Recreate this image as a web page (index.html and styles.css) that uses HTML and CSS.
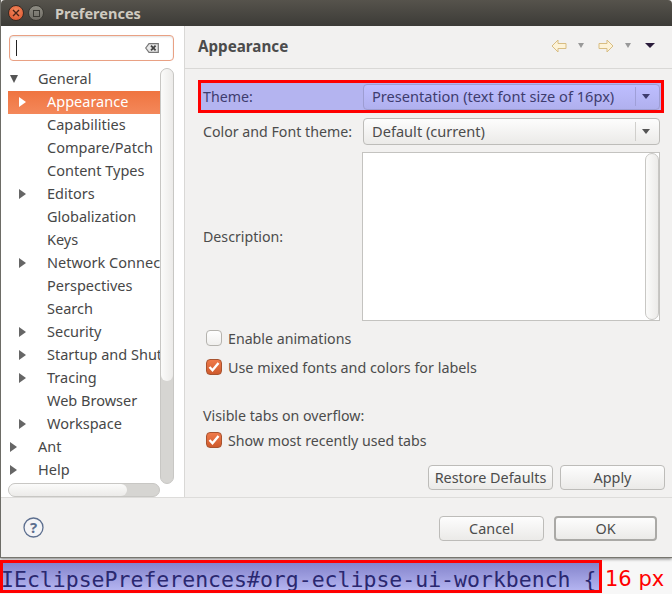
FILE: index.html
```html
<!DOCTYPE html>
<html lang="en">
<head>
    <meta charset="UTF-8">
    <title>Preferences</title>
    <link rel="stylesheet" href="styles.css">
</head>
<body>
    <div class="window">
        <header class="titlebar">
            <span class="win-btn close">
                <svg width="8" height="8" viewBox="0 0 8 8"><path d="M1 1l6 6M7 1l-6 6" stroke="#4a2418" stroke-width="1.4"/></svg>
            </span>
            <span class="win-btn max"><span class="max-box"></span></span>
            <span class="title">Preferences</span>
        </header>
        <div class="main">
            <aside class="sidebar">
                <div class="search">
                    <span class="caret"></span>
                    <svg class="clear" width="14" height="10" viewBox="0 0 14 10"><path d="M4 .7h9.3v8.6H4L.7 5z" fill="#e8e8e8" stroke="#777" stroke-width="1.2"/><path d="M6 2.6l4.6 4.8M10.6 2.6L6 7.4" stroke="#444" stroke-width="1.8"/></svg>
                </div>
                <div class="tree-wrap">
                    <div class="tree-col">
                        <ul class="tree">
                            <li class="lvl0"><i class="arrow open"></i>General</li>
                            <li class="lvl1 selected"><i class="arrow"></i>Appearance</li>
                            <li class="lvl1"><i></i>Capabilities</li>
                            <li class="lvl1"><i></i>Compare/Patch</li>
                            <li class="lvl1"><i></i>Content Types</li>
                            <li class="lvl1"><i class="arrow"></i>Editors</li>
                            <li class="lvl1"><i></i>Globalization</li>
                            <li class="lvl1"><i></i>Keys</li>
                            <li class="lvl1"><i class="arrow"></i>Network Connections</li>
                            <li class="lvl1"><i></i>Perspectives</li>
                            <li class="lvl1"><i></i>Search</li>
                            <li class="lvl1"><i class="arrow"></i>Security</li>
                            <li class="lvl1"><i class="arrow"></i>Startup and Shutdown</li>
                            <li class="lvl1"><i class="arrow"></i>Tracing</li>
                            <li class="lvl1"><i></i>Web Browser</li>
                            <li class="lvl1"><i class="arrow"></i>Workspace</li>
                            <li class="lvl0"><i class="arrow"></i>Ant</li>
                            <li class="lvl0"><i class="arrow"></i>Help</li>
                        </ul>
                        <div class="hscroll"><div class="hthumb"></div></div>
                    </div>
                    <div class="vscroll"><div class="vthumb"></div></div>
                </div>
            </aside>
            <section class="content">
                <div class="content-head">
                    <h2>Appearance</h2>
                    <div class="nav">
                        <svg class="nav-arrow" width="16" height="14" viewBox="0 0 16 14"><path d="M1 7l6-6v3.500h8v5H7V13z" fill="#fdf3d8" stroke="#d8bd82"/></svg>
                        <i class="mini grey"></i>
                        <svg class="nav-arrow right" width="16" height="14" viewBox="0 0 16 14"><path d="M15 7L9 1v3.500H1v5h8V13z" fill="#fdf3d8" stroke="#d8bd82"/></svg>
                        <i class="mini grey"></i>
                        <i class="mini dark"></i>
                    </div>
                </div>
                <div class="form">
                    <div class="theme-row">
                        <label class="row-label">Theme:</label>
                        <div class="combo combo-blue">
                            <span>Presentation (text font size of 16px)</span>
                            <b class="combo-sep"></b><i class="mini combo-arrow"></i>
                        </div>
                    </div>
                    <div class="plain-row">
                        <label class="row-label">Color and Font theme:</label>
                        <div class="combo">
                            <span>Default (current)</span>
                            <b class="combo-sep"></b><i class="mini combo-arrow"></i>
                        </div>
                    </div>
                    <div class="desc-row">
                        <label class="row-label">Description:</label>
                        <div class="desc-box"><div class="desc-scroll"></div></div>
                    </div>
                    <div class="check first"><span class="box"></span>Enable animations</div>
                    <div class="check second"><span class="box on"><svg width="14" height="12" viewBox="0 0 14 12"><path d="M2.500 6l3 3.200L11.500 2" fill="none" stroke="#fff" stroke-width="2.400"/></svg></span>Use mixed fonts and colors for labels</div>
                    <div class="tabs-label">Visible tabs on overflow:</div>
                    <div class="check third"><span class="box on"><svg width="14" height="12" viewBox="0 0 14 12"><path d="M2.500 6l3 3.200L11.500 2" fill="none" stroke="#fff" stroke-width="2.400"/></svg></span>Show most recently used tabs</div>
                    <div class="apply-row">
                        <button class="btn restore">Restore Defaults</button>
                        <button class="btn apply">Apply</button>
                    </div>
                </div>
            </section>
        </div>
        <footer class="dialog-foot">
            <svg class="help" width="21" height="21" viewBox="0 0 21 21"><circle cx="10.500" cy="10.500" r="9.500" fill="#f4f4f6" stroke="#5d6f8f" stroke-width="1.300"/><text x="10.500" y="15.500" text-anchor="middle" class="help-q">?</text></svg>
            <div class="foot-btns">
                <button class="btn cancel">Cancel</button>
                <button class="btn ok">OK</button>
            </div>
        </footer>
    </div>
    <div class="code-strip">
        <div class="code-frame">IEclipsePreferences#org-eclipse-ui-workbench {</div>
        <span class="code-note">16 px</span>
    </div>
</body>
</html>
```

FILE: styles.css
```css
* {
    box-sizing: border-box;
}
html, body {
    margin: 0;
    padding: 0;
}
body {
    width: 672px;
    height: 594px;
    overflow: hidden;
    background-color: #f7f7f7;
    font-family: "Noto Sans", "Open Sans", sans-serif;
    font-size: 14.200px;
    color: #4c4c4c;
}
.window {
    height: 558px;
    display: flex;
    flex-direction: column;
    background-color: #f2f1f0;
    border-left: 1px solid #6d6c66;
    border-bottom: 1px solid #77766f;
    box-shadow: 0 1px 3px rgba(0, 0, 0, 0.5);
}
.titlebar {
    height: 26px;
    flex: none;
    display: flex;
    align-items: center;
    padding-left: 7px;
    background: linear-gradient(#56534c, #3c3b37);
    border-radius: 4px 4px 0 0;
}
.win-btn {
    width: 16px;
    height: 16px;
    border-radius: 50%;
    display: flex;
    align-items: center;
    justify-content: center;
    margin-right: 4px;
}
.close {
    background: radial-gradient(circle at 50% 35%, #f48a5e, #d9502a);
    border: 1px solid #3a2a22;
}
.max {
    background: linear-gradient(#8f8d84, #6e6c65);
    border: 1px solid #3a3933;
}
.max-box {
    width: 7px;
    height: 7px;
    border: 1px solid #3a3933;
}
.title {
    margin-left: 7px;
    font-size: 14.500px;
    font-weight: 700;
    color: #cfcbc0;
}
.main {
    flex: 1;
    display: flex;
    min-height: 0;
}
.sidebar {
    width: 184px;
    flex: none;
    background-color: #fff;
    border-right: 1px solid #d9d8d6;
    padding: 9px 0 0 7px;
    display: flex;
    flex-direction: column;
}
.search {
    width: 165px;
    height: 26px;
    flex: none;
    margin-left: 1px;
    border: 1px solid #e9a184;
    border-radius: 4px;
    box-shadow: inset 0 1px 2px rgba(0, 0, 0, 0.12);
    display: flex;
    align-items: center;
    justify-content: space-between;
    padding: 0 14px 0 6px;
}
.caret {
    width: 1px;
    height: 16px;
    background-color: #222;
}
.tree-wrap {
    flex: 1;
    min-height: 0;
    margin-top: 7px;
    display: flex;
}
.tree-col {
    width: 152px;
    display: flex;
    flex-direction: column;
    min-height: 0;
}
.tree {
    list-style: none;
    margin: 0;
    padding: 0;
    flex: 1;
    overflow: hidden;
    font-size: 14.500px;
}
.tree li {
    height: 23px;
    padding-bottom: 4px;
    white-space: nowrap;
    overflow: hidden;
    display: flex;
    align-items: center;
    color: #474747;
}
.tree li i {
    flex: none;
    display: block;
    margin-top: 3px;
}
.lvl0 {
    padding-left: 2px;
}
.lvl0 i {
    margin-right: 21px;
}
.lvl1 {
    padding-left: 11px;
}
.lvl1 i {
    margin-right: 21px;
    width: 7px;
    height: 10px;
}
.arrow {
    width: 0;
    height: 0;
    border-left: 7px solid #666;
    border-top: 5px solid transparent;
    border-bottom: 5px solid transparent;
}
.lvl1 .arrow {
    width: 7px;
    height: 10px;
}
.arrow.open {
    border-top: 8px solid #555;
    border-left: 4.500px solid transparent;
    border-right: 4.500px solid transparent;
    border-bottom: 0;
    margin-right: 20px;
}
.selected {
    color: #fff !important;
    background: linear-gradient(#ef7440, #f4885a);
}
.selected .arrow {
    border-left-color: #fff;
}
.hscroll {
    height: 14px;
    flex: none;
    background-color: #d6d5d2;
    border-radius: 7px;
    border: 1px solid #c8c7c4;
}
.hthumb {
    width: 118px;
    height: 12px;
    background: linear-gradient(#fbfbfa, #ecebe9);
    border-radius: 6px;
}
.vscroll {
    width: 14px;
    height: 416px;
    background-color: #d6d5d2;
    border-radius: 7px;
    border: 1px solid #c8c7c4;
}
.vthumb {
    height: 312px;
    background: linear-gradient(90deg, #fbfbfa, #ecebe9);
    border-radius: 6px;
}
.content {
    flex: 1;
    display: flex;
    flex-direction: column;
    min-width: 0;
}
.content-head {
    height: 43px;
    flex: none;
    border-bottom: 1px solid #d9d8d6;
    display: flex;
    align-items: center;
    justify-content: space-between;
    padding: 0 17px 3px 13px;
}
h2 {
    margin: 0;
    font-size: 15.200px;
    font-weight: 700;
    color: #4c4c4c;
}
.nav {
    display: flex;
    align-items: center;
}
.mini {
    display: block;
    width: 0;
    height: 0;
    border-top: 5px solid #555;
    border-left: 5px solid transparent;
    border-right: 5px solid transparent;
}
.mini.grey {
    border-top-color: #999;
    border-left-width: 3.500px;
    border-right-width: 3.500px;
    margin: 0 14px 0 11px;
}
.mini.dark {
    border-top-color: #2a1c3a;
}
.form {
    padding: 11px 0 0 13px;
    flex: 1;
}
.theme-row {
    width: 466px;
    height: 33px;
    border: 3px solid #f00;
    background-color: #b4b4f0;
    display: flex;
    align-items: center;
    padding-left: 2px;
    color: #3e3c6e;
}
.row-label {
    width: 160px;
    flex: none;
}
.combo {
    width: 297px;
    height: 27px;
    flex: none;
    border: 1px solid #bdbcb9;
    border-radius: 4px;
    background: linear-gradient(#fdfdfd, #ebeae8);
    display: flex;
    align-items: center;
    padding-left: 8px;
    color: #4c4c4c;
    font-size: 14.600px;
}
.combo span {
    flex: 1;
    padding-bottom: 2px;
}
.combo-sep {
    width: 1px;
    height: 19px;
    background-color: #d0cfcc;
}
.combo-arrow {
    border-top-width: 5px;
    border-left-width: 4px;
    border-right-width: 4px;
    margin: 0 9px 0 6px;
}
.combo-blue {
    height: 26px;
    background: linear-gradient(#bebeff, #b0b0ee);
    border-color: #9d9dd2;
    color: #3e3c6e;
}
.combo-blue .combo-sep {
    background-color: #9f9fd8;
}
.combo-blue .combo-arrow {
    border-top-color: #3e3c6e;
}
.plain-row {
    display: flex;
    align-items: center;
    height: 27px;
    margin: 5px 0 0 5px;
}
.plain-row .row-label {
    width: 160px;
}
.desc-row {
    display: flex;
    align-items: center;
    height: 169px;
    margin: 7px 0 0 5px;
}
.desc-row .row-label {
    width: 159px;
}
.desc-box {
    width: 298px;
    height: 169px;
    background-color: #fff;
    border: 1px solid #c4c3c0;
    display: flex;
    justify-content: flex-end;
}
.desc-scroll {
    width: 14px;
    background: linear-gradient(90deg, #fbfbfa, #ecebe9);
    border: 1px solid #c8c7c4;
    border-radius: 7px;
}
.check {
    display: flex;
    align-items: center;
    height: 20px;
    margin-left: 8px;
    white-space: nowrap;
}
.check.first {
    margin-top: 7px;
}
.check.second {
    margin-top: 9px;
    font-size: 14.350px;
}
.check.third {
    margin-top: 4px;
}
.box {
    width: 16px;
    height: 16px;
    margin-right: 6px;
    border: 1px solid #b5b3ae;
    border-radius: 4px;
    background: linear-gradient(#fefefe, #f0efed);
    display: flex;
    align-items: center;
    justify-content: center;
}
.box.on {
    background: linear-gradient(#ef7a4a, #cf5a2c);
    border-color: #a8532f;
}
.tabs-label {
    margin: 29px 0 0 5px;
    height: 20px;
    line-height: 20px;
}
.apply-row {
    display: flex;
    justify-content: flex-end;
    gap: 7px;
    width: 467px;
    margin-top: 15px;
}
.btn {
    height: 25px;
    padding: 0;
    font: inherit;
    font-size: 14.400px;
    color: #4c4c4c;
    border: 1px solid #bdbcb9;
    border-radius: 4px;
    background: linear-gradient(#fdfdfd, #ebeae8);
}
.restore {
    width: 125px;
}
.apply {
    width: 105px;
}
.dialog-foot {
    height: 60px;
    flex: none;
    border-top: 1px solid #dddcda;
    display: flex;
    align-items: center;
    justify-content: space-between;
    padding: 2px 15px 0 22px;
}
.help {
    margin-bottom: 3px;
}
.help-q {
    font-size: 15px;
    font-weight: 700;
    fill: #5d6f8f;
}
.foot-btns {
    display: flex;
    gap: 10px;
}
.cancel {
    width: 105px;
}
.ok {
    width: 103px;
    border: 2px solid #aaa9a6;
}
.code-strip {
    display: flex;
    align-items: center;
    height: 33px;
    margin-top: 2px;
}
.code-frame {
    width: 602px;
    height: 33px;
    flex: none;
    border: 3px solid #f00;
    background: linear-gradient(#8484cc, #b4b4f0);
    font-family: "DejaVu Sans Mono", monospace;
    font-size: 21.500px;
    line-height: 33px;
    color: #2a2870;
    text-indent: -2px;
    white-space: nowrap;
    overflow: hidden;
}
.code-note {
    margin-left: 3px;
    padding-top: 5px;
    font-size: 21px;
    color: #f00;
    font-family: "DejaVu Sans", sans-serif;
    white-space: nowrap;
}
```
